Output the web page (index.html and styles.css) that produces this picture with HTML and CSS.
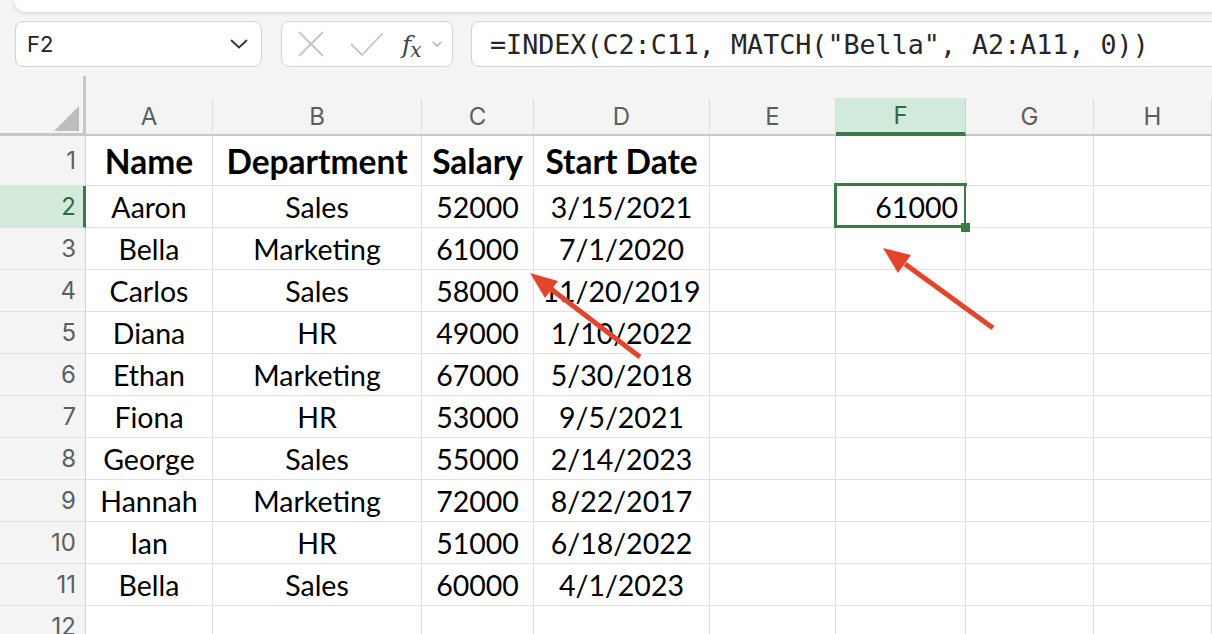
FILE: index.html
```html
<!DOCTYPE html>
<html lang="en">
<head>
    <meta charset="UTF-8">
    <meta name="viewport" content="width=device-width, initial-scale=1.0">
    <title>INDEX MATCH - Sheet</title>
    <link rel="stylesheet" href="styles.css">
</head>
<body>
    <div class="topbar"></div>

    <div class="formula-row">
        <div class="name-box">
            <span>F2</span>
            <svg width="18" height="10" viewBox="0 0 18 10"><path d="M1.5 1.5 L9 8.5 L16.5 1.5" fill="none" stroke="#333" stroke-width="1.8" stroke-linecap="round"/></svg>
        </div>
        <div class="fn-box">
            <svg width="26" height="26" viewBox="0 0 26 26"><path d="M1 1 L25 25 M25 1 L1 25" fill="none" stroke="#c4c4c4" stroke-width="1.8"/></svg>
            <svg class="check" width="34" height="26" viewBox="0 0 34 26"><path d="M1 13 L12 24 L33 2" fill="none" stroke="#c4c4c4" stroke-width="1.8"/></svg>
            <span class="fx">f<span class="fx-sub">x</span></span>
            <svg width="10" height="6" viewBox="0 0 10 6"><path d="M1 1 L5 5 L9 1" fill="none" stroke="#aaa" stroke-width="1.3"/></svg>
        </div>
        <div class="formula-box">=INDEX(C2:C11, MATCH("Bella", A2:A11, 0))</div>
    </div>

    <div class="sheet" id="sheet"></div>

    <svg class="arrows" width="1212" height="634" viewBox="0 0 1212 634">
        <line x1="640" y1="357" x2="551" y2="289" stroke="#e5442c" stroke-width="5"/>
        <polygon points="530,273 558,281 545,298" fill="#e5442c"/>
        <line x1="993" y1="328" x2="905" y2="264" stroke="#e5442c" stroke-width="5"/>
        <polygon points="883,248 911,255 898,273" fill="#e5442c"/>
    </svg>

    <script>
        const columns = ['A', 'B', 'C', 'D', 'E', 'F', 'G', 'H'];
        const rows = [
            ['Name', 'Department', 'Salary', 'Start Date'],
            ['Aaron', 'Sales', '52000', '3/15/2021'],
            ['Bella', 'Marketing', '61000', '7/1/2020'],
            ['Carlos', 'Sales', '58000', '11/20/2019'],
            ['Diana', 'HR', '49000', '1/10/2022'],
            ['Ethan', 'Marketing', '67000', '5/30/2018'],
            ['Fiona', 'HR', '53000', '9/5/2021'],
            ['George', 'Sales', '55000', '2/14/2023'],
            ['Hannah', 'Marketing', '72000', '8/22/2017'],
            ['Ian', 'HR', '51000', '6/18/2022'],
            ['Bella', 'Sales', '60000', '4/1/2023'],
            []
        ];

        function cell(className, text) {
            const div = document.createElement('div');
            div.className = className;
            if (text) div.textContent = text;
            return div;
        }

        function buildSheet() {
            const sheet = document.getElementById('sheet');
            const corner = cell('corner');
            corner.appendChild(cell('corner-tri'));
            sheet.appendChild(corner);
            columns.forEach(col => {
                sheet.appendChild(cell(col === 'F' ? 'col-head active' : 'col-head', col));
            });

            rows.forEach((row, i) => {
                const num = i + 1;
                sheet.appendChild(cell(num === 2 ? 'row-head active' : 'row-head', String(num)));
                columns.forEach((col, j) => {
                    let cls = num === 1 ? 'cell head' : 'cell';
                    let text = row[j] || '';
                    if (num === 2 && col === 'F') {
                        cls += ' selected';
                        text = '61000';
                    }
                    const c = cell(cls, text);
                    if (cls.includes('selected')) c.appendChild(cell('handle'));
                    sheet.appendChild(c);
                });
            });
        }

        buildSheet();
    </script>
</body>
</html>
```

FILE: styles.css
```css
body {
    margin: 0;
    width: 1212px;
    height: 634px;
    overflow: hidden;
    position: relative;
    background-color: #f4f4f4;
    font-family: Inter, "Noto Sans", sans-serif;
}

.topbar {
    height: 12px;
    margin-left: 14px;
    margin-right: -20px;
    background: white;
    border-bottom-left-radius: 12px;
    box-shadow: 0 1px 4px rgba(0, 0, 0, 0.14);
}

.formula-row {
    display: flex;
    height: 46px;
    padding: 9px 0 9px 15px;
}

.name-box,
.fn-box,
.formula-box {
    box-sizing: border-box;
    height: 46px;
    background: white;
    border: 1.5px solid #d4d4d4;
    border-radius: 8px;
    display: flex;
    align-items: center;
}

.name-box {
    width: 247px;
    padding: 0 13px 0 11px;
    justify-content: space-between;
    font-size: 22px;
    color: #222;
}

.fn-box {
    width: 172px;
    margin-left: 19px;
    padding-left: 16px;
}

.fn-box .check {
    margin-left: 26px;
}

.fx {
    margin-left: 18px;
    margin-right: 10px;
    font-family: "DejaVu Serif", serif;
    font-style: italic;
    font-size: 25px;
    color: #444;
    line-height: 1;
}

.fx-sub {
    font-size: 20px;
    position: relative;
    top: 4px;
    margin-left: -1px;
}

.formula-box {
    flex: 1;
    margin-left: 18px;
    margin-right: -20px;
    padding-left: 18px;
    font-family: "DejaVu Sans Mono", monospace;
    font-size: 26.7px;
    color: #262626;
    white-space: pre;
}

.sheet {
    display: grid;
    grid-template-columns: 86px 127px 209px 112px 176px 126px 130px 128px 1fr;
    grid-template-rows: 60px 50px repeat(11, 42px);
}

.corner {
    position: relative;
    box-sizing: border-box;
    border-right: 3px solid #c6c6c6;
    border-bottom: 3px solid #c6c6c6;
}

.corner-tri {
    position: absolute;
    right: 4px;
    bottom: 2px;
    width: 0;
    height: 0;
    border-left: 25px solid transparent;
    border-bottom: 25px solid #bdbdbd;
}

.col-head {
    align-self: end;
    height: 38px;
    box-sizing: border-box;
    border-right: 1px solid #dcdcdc;
    border-bottom: 2px solid #c8c8c8;
    display: flex;
    align-items: center;
    justify-content: center;
    font-size: 24px;
    color: #5e5e5e;
}

.col-head.active {
    background: #d2eadb;
    color: #2f6b3c;
    border-bottom: 4px solid #3a7a47;
    border-right-color: #b9d9c3;
}

.row-head {
    box-sizing: border-box;
    border-right: 1px solid #cfcfcf;
    border-bottom: 1px solid #e0e0e0;
    display: flex;
    align-items: center;
    justify-content: flex-end;
    padding-right: 9px;
    font-size: 24px;
    color: #5e5e5e;
}

.row-head.active {
    background: #d4ebdc;
    color: #2f6b3c;
    border-right: 3px solid #3a7a47;
    padding-right: 7px;
}

.cell {
    position: relative;
    box-sizing: border-box;
    background: white;
    border-right: 1px solid #e0e0e0;
    border-bottom: 1px solid #e0e0e0;
    display: flex;
    align-items: center;
    justify-content: center;
    font-family: Lato, "Liberation Sans", sans-serif;
    font-size: 28.5px;
    color: #000;
    white-space: nowrap;
}

.cell.head {
    font-weight: bold;
    font-size: 33.5px;
}

.cell.selected {
    justify-content: flex-end;
    padding-right: 7px;
}

.cell.selected::after {
    content: "";
    position: absolute;
    top: -3px;
    left: -2px;
    right: -2px;
    bottom: -1px;
    border: 3px solid #3a7a47;
}

.handle {
    position: absolute;
    right: -5px;
    bottom: -5px;
    width: 9px;
    height: 9px;
    background: #3a7a47;
    z-index: 1;
}

.arrows {
    position: absolute;
    top: 0;
    left: 0;
    pointer-events: none;
}
```
